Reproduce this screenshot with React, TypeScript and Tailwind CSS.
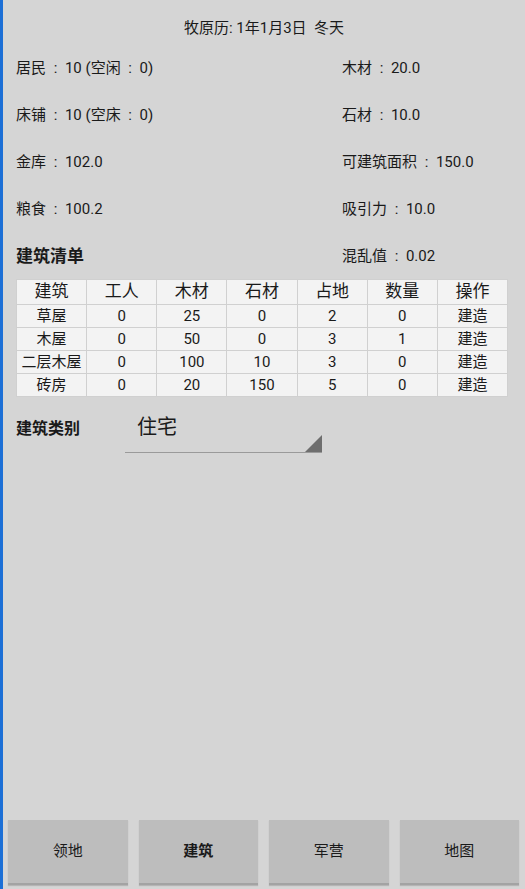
import React from 'react';

const font = { fontFamily: '"Roboto", "Noto Sans CJK SC", sans-serif' };

const stats: [string, string][] = [
  ['居民\u2002:\u200210 (空闲\u2002:\u20020)', '木材\u2002:\u200220.0'],
  ['床铺\u2002:\u200210 (空床\u2002:\u20020)', '石材\u2002:\u200210.0'],
  ['金库\u2002:\u2002102.0', '可建筑面积\u2002:\u2002150.0'],
  ['粮食\u2002:\u2002100.2', '吸引力\u2002:\u200210.0'],
];

const headers = ['建筑', '工人', '木材', '石材', '占地', '数量', '操作'];
const rows = [
  ['草屋', '0', '25', '0', '2', '0', '建造'],
  ['木屋', '0', '50', '0', '3', '1', '建造'],
  ['二层木屋', '0', '100', '10', '3', '0', '建造'],
  ['砖房', '0', '20', '150', '5', '0', '建造'],
];

const tabs = [
  { label: '领地', active: false },
  { label: '建筑', active: true },
  { label: '军营', active: false },
  { label: '地图', active: false },
];

export default function App() {
  return (
    <div className="flex h-[889px] w-[525px] bg-[#d5d5d5] text-[#1a1a1a]" style={font}>
      <div className="w-[3px] bg-[#1c6fd6] shrink-0" />
      <div className="flex flex-1 flex-col">
        <div className="pt-[17px] text-center text-[15px] leading-[22px]">牧原历: 1年1月3日&nbsp;&nbsp;冬天</div>

        <div className="mt-[18px] flex flex-col">
          {stats.map(([l, r]) => (
            <div key={l} className="flex h-[47px] items-start text-[15px] leading-[22px]">
              <div className="w-[339px] pl-[13px] whitespace-pre">{l}</div>
              <div className="whitespace-pre">{r}</div>
            </div>
          ))}
          <div className="flex h-[32px] items-start leading-[22px]">
            <div className="w-[339px] pl-[13px] text-[17px] font-bold">建筑清单</div>
            <div className="text-[15px] whitespace-pre">{'混乱值\u2002:\u20020.02'}</div>
          </div>
        </div>

        <div className="ml-[13px] mt-[2px] grid w-[492px] grid-cols-7 gap-[1px] bg-[#d0d0d0] p-[1px]">
          {headers.map((h) => (
            <div key={h} className="flex h-[24px] items-center justify-center bg-[#f3f3f3] text-[17px]">
              {h}
            </div>
          ))}
          {rows.map((r) =>
            r.map((c, i) => (
              <div key={r[0] + i} className="flex h-[22px] items-center justify-center bg-[#f3f3f3] text-[15px]">
                {c}
              </div>
            )),
          )}
        </div>

        <div className="mt-[16px] flex items-start">
          <div className="w-[122px] pl-[13px] pt-[5px] text-[16px] font-bold leading-[22px]">建筑类别</div>
          <div className="relative h-[40px] w-[197px] border-b border-[#9a9a9a]">
            <div className="pl-[12px] text-[20px] leading-[28px]">住宅</div>
            <svg className="absolute bottom-0 right-0" width="17" height="17" viewBox="0 0 17 17">
              <polygon points="17,0 17,17 0,17" fill="#6e6e6e" />
            </svg>
          </div>
        </div>

        <div className="flex-1" />

        <div className="mb-[4px] grid grid-cols-4 gap-[11px] pl-[5px] pr-[6px]">
          {tabs.map((t) => (
            <div
              key={t.label}
              className={`flex h-[65px] items-center justify-center bg-[#bdbdbd] border-b-2 border-[#a3a3a3] shadow-[0_1px_1px_rgba(0,0,0,0.15)] text-[15px] ${t.active ? 'font-bold' : ''}`}
            >
              {t.label}
            </div>
          ))}
        </div>
      </div>
    </div>
  );
}
